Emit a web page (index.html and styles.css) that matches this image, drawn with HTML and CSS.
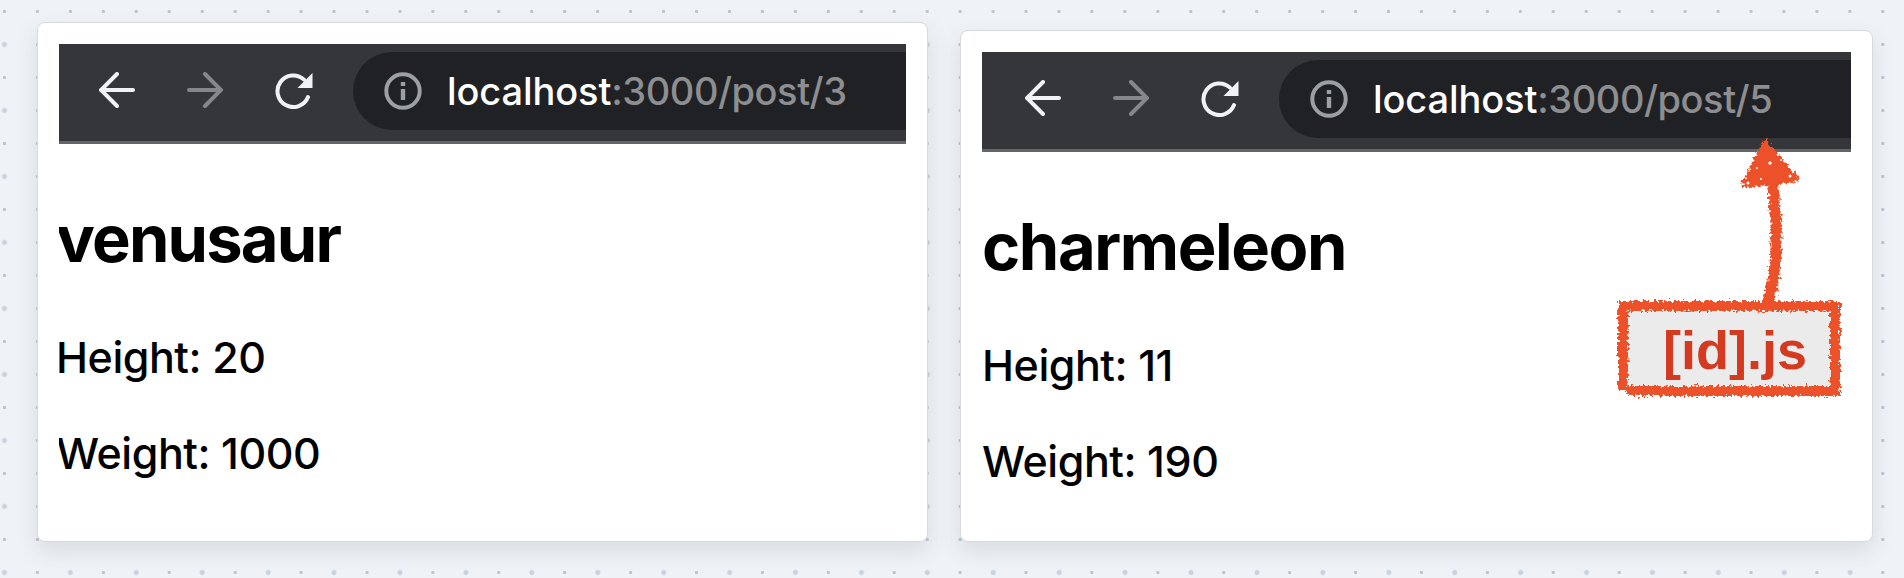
FILE: index.html
```html
<!DOCTYPE html>
<html lang="en">
<head>
<meta charset="utf-8">
<title>Dynamic routes</title>
<link rel="stylesheet" href="styles.css">
</head>
<body>
<svg class="defs" aria-hidden="true">
  <symbol id="back" viewBox="0 0 36 36"><path d="M18 2 2 18l16 16M2 18h32" fill="none" stroke="currentColor" stroke-width="4" stroke-linecap="round"/></symbol>
  <symbol id="forward" viewBox="0 0 36 36"><path d="m18 2 16 16-16 16M34 18H2" fill="none" stroke="currentColor" stroke-width="4" stroke-linecap="round"/></symbol>
  <symbol id="reload" viewBox="0 0 38 36"><path d="M33 24a15.8 15.8 0 1 1-4-17.4" fill="none" stroke="currentColor" stroke-width="4" stroke-linecap="round"/><path d="M37.5 0v15H22.5z" fill="currentColor"/></symbol>
  <symbol id="info" viewBox="0 0 38 38"><circle cx="19" cy="19" r="16.7" fill="none" stroke="currentColor" stroke-width="4"/><path d="M16.8 10h4.4v4h-4.4zM16.8 17h4.4v11h-4.4z" fill="currentColor"/></symbol>
</svg>
<main class="board">
  <section class="card card-left">
    <div class="toolbar">
      <svg class="nav"><use href="#back"/></svg>
      <svg class="nav dim"><use href="#forward"/></svg>
      <svg class="reload"><use href="#reload"/></svg>
      <div class="address"><svg class="info"><use href="#info"/></svg><span class="url"><span class="host">localhost</span>:3000/post/3</span></div>
    </div>
    <div class="page">
      <h1 class="name">venusaur</h1>
      <p class="stat">Height: 20</p>
      <p class="stat">Weight: 1000</p>
    </div>
  </section>
  <section class="card card-right">
    <div class="toolbar">
      <svg class="nav"><use href="#back"/></svg>
      <svg class="nav dim"><use href="#forward"/></svg>
      <svg class="reload"><use href="#reload"/></svg>
      <div class="address"><svg class="info"><use href="#info"/></svg><span class="url"><span class="host">localhost</span>:3000/post/5</span></div>
    </div>
    <div class="page">
      <h1 class="name">charmeleon</h1>
      <p class="stat">Height: 11</p>
      <p class="stat">Weight: 190</p>
    </div>
    <svg class="note" viewBox="1610 130 240 275">
      <filter id="crayon" x="-10%" y="-10%" width="120%" height="120%">
        <feTurbulence type="fractalNoise" baseFrequency=".35" numOctaves="3" seed="4" result="n"/>
        <feDisplacementMap in="SourceGraphic" in2="n" scale="8" xChannelSelector="R" yChannelSelector="G"/>
      </filter>
      <rect x="1624" y="306" width="213" height="86" fill="#ebebeb"/>
      <g filter="url(#crayon)" fill="none" stroke="#ec512b">
        <path d="M1619 306H1840M1835 303V396M1840 391H1627M1623 302V390" stroke-width="10"/>
        <path d="M1772 180Q1782 255 1768 303" stroke-width="11"/>
        <path d="M1765 144 1745 184 1795 179Z" stroke-width="7" stroke-linejoin="round" fill="#ec512b"/>
      </g>
      <g fill="#fff"><circle cx="1770" cy="163" r="1.7"/><circle cx="1757" cy="168" r="1"/><circle cx="1748" cy="183" r="1.5"/><circle cx="1790" cy="176" r="1.5"/><circle cx="1781" cy="160" r="1"/><circle cx="1761" cy="179" r="1.1"/></g>
      <text class="note-text" x="1663" y="369">[id].js</text>
    </svg>
  </section>
</main>
</body>
</html>
```
FILE: styles.css
```css
* { box-sizing: border-box; }
body {
  margin: 0;
  overflow: hidden;
  background-color: #eff3f7;
  background-image:
    linear-gradient(#eff3f6, #eff3f6),
    radial-gradient(circle at 50% 50%, #c8d1de 2.3px, transparent 2.8px),
    radial-gradient(circle at 50% 50%, #bbc4cf 1.3px, transparent 1.9px);
  background-size: 0 0, 65.93px 66px, 32.965px 33px;
  background-position: 0 0, -28.5px 11.5px, -12px -5px;
  font-family: Inter, "Liberation Sans", sans-serif;
}
.defs { position: absolute; width: 0; height: 0; }
.board {
  height: 578px;
  padding: 22px 31px 36.5px 37px;
  display: flex;
  justify-content: space-between;
  align-items: flex-end;
}
.card {
  position: relative;
  padding: 21px;
  background: #fff;
  border: 1px solid #d8dbde;
  border-radius: 8px;
  box-shadow: 0 9px 22px rgba(60, 70, 80, .13);
}
.card-left { width: 891px; height: 519.5px; }
.card-right { width: 913px; height: 511.5px; }
.toolbar {
  height: 100px;
  padding: 8px 0 12px 40px;
  display: flex;
  align-items: flex-start;
  background: #35363a;
  border-bottom: 3px solid #646569;
  color: #f1f2f4;
}
.card-right .toolbar { padding-left: 43px; }
.nav { width: 36px; height: 36px; margin: 20px 52px 0 0; }
.dim { color: #86878a; }
.reload { width: 38px; height: 36px; margin: 21px 40px 0 0; }
.address {
  flex: 1;
  height: 78px;
  padding-left: 31px;
  display: flex;
  align-items: center;
  background: #202124;
  border-radius: 39px 0 0 39px;
}
.info { width: 38px; height: 38px; color: #9aa0a4; }
.url {
  margin-left: 25px;
  font-size: 38px;
  line-height: 46px;
  font-weight: 450;
  letter-spacing: -.45px;
  white-space: nowrap;
  color: #8d8e90;
}
.host { color: #fff; letter-spacing: -.1px; }
.page { clip-path: inset(0); }
.name {
  margin: 0 0 0 -3px;
  padding-top: 55px;
  font-size: 65px;
  line-height: 80px;
  font-weight: 700;
  letter-spacing: -1.8px;
}
.stat {
  margin: 44px 0 0 -3px;
  font-size: 43px;
  line-height: 52px;
  font-weight: 450;
  letter-spacing: -.45px;
}
.name + .stat { margin-top: 52px; }
.card-right .name, .card-right .stat { margin-left: 0; }
.card-right .name { letter-spacing: -1.4px; }
.note {
  position: absolute;
  left: 649px;
  top: 99px;
  width: 240px;
  height: 275px;
}
.note-text {
  font: bold 54px "Liberation Sans", Arial, sans-serif;
  fill: #d43a20;
}
```
